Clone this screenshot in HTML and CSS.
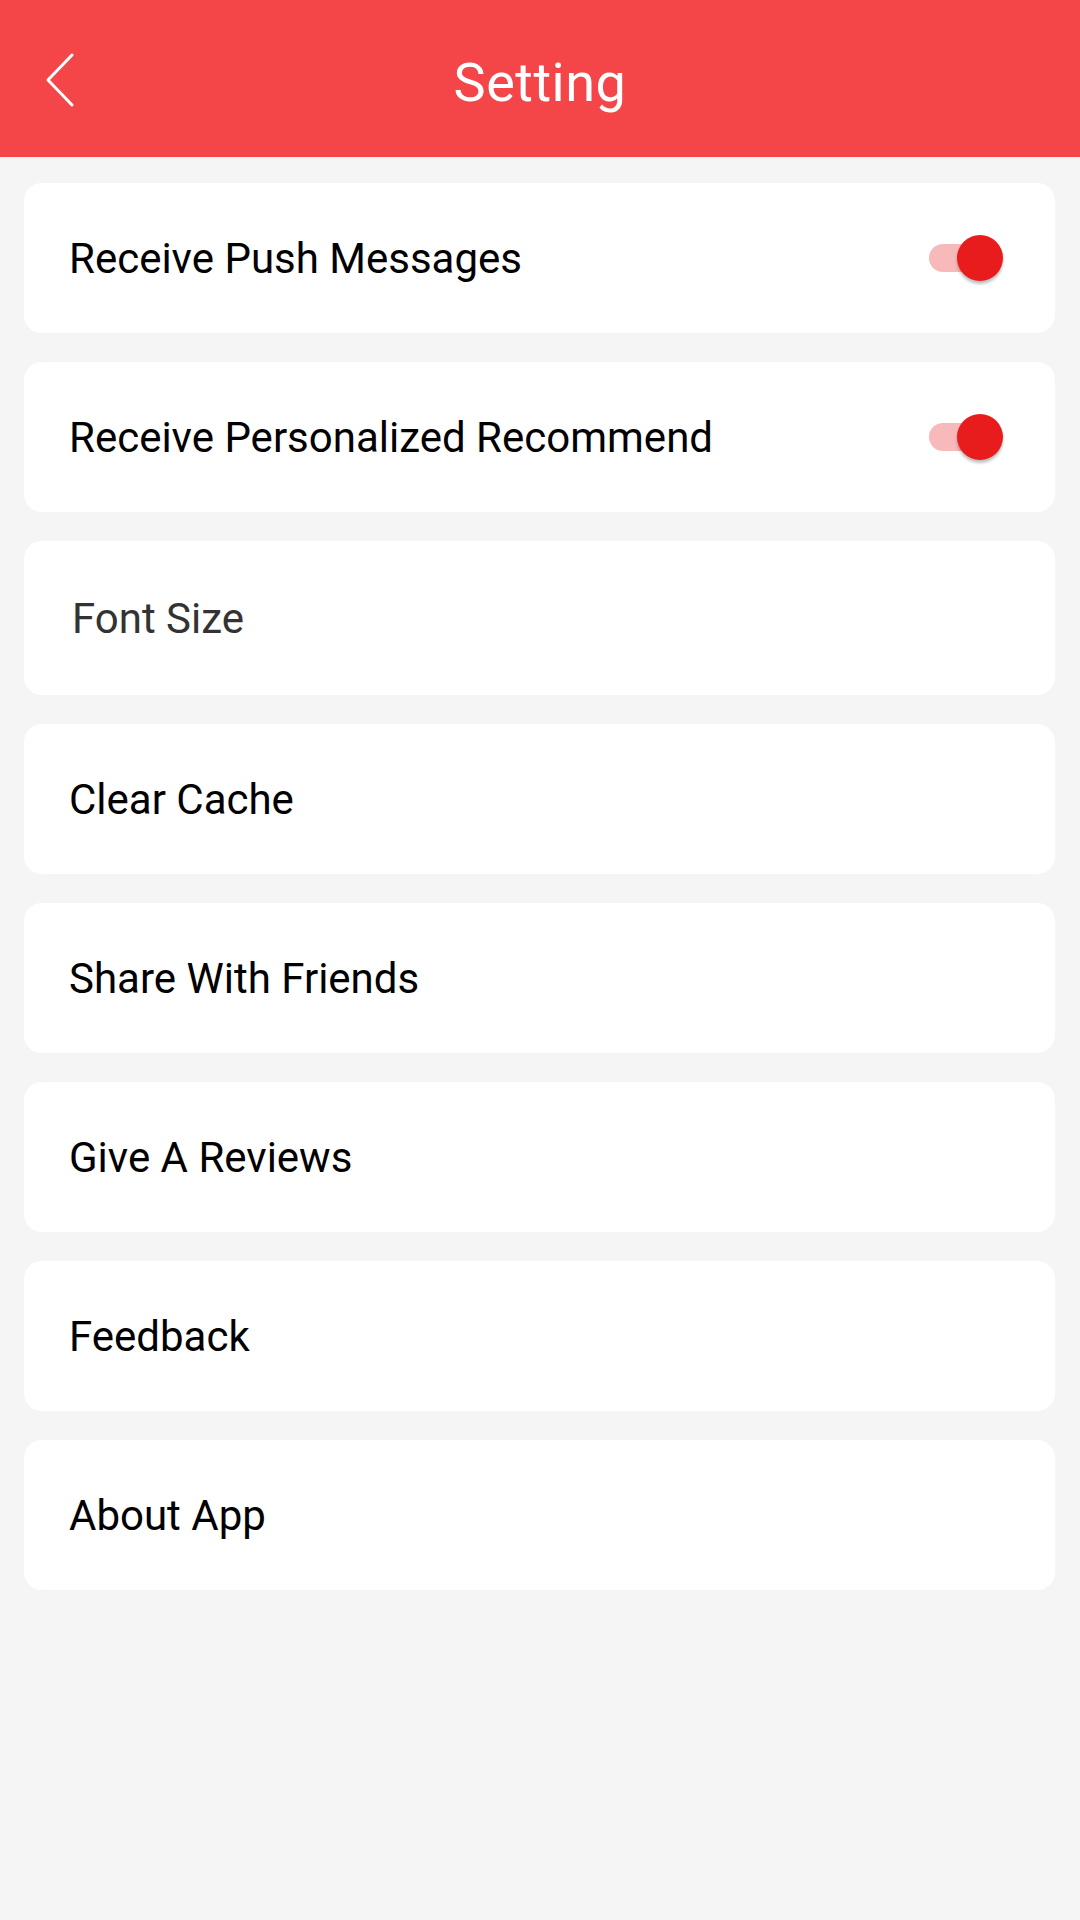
FILE: index.html
```html
<!DOCTYPE html>
<html lang="en">
<head>
	<meta charset="UTF-8">
	<title>Setting</title>
	<link rel="stylesheet" href="styles.css">
</head>
<body>
	<div class="header">
		<a href="javascript:;" class="back">
			<svg width="30" height="56" viewBox="0 0 30 56"><polyline points="27,2 3,27 27,52" fill="none" stroke="#fff" stroke-width="3" stroke-linecap="round" stroke-linejoin="round"/></svg>
		</a>
		<h1 class="title">Setting</h1>
	</div>
	<ul class="list">
		<li class="item">
			<span>Receive Push Messages</span>
			<span class="switch on"><i></i></span>
		</li>
		<li class="item">
			<span>Receive Personalized Recommend</span>
			<span class="switch on"><i></i></span>
		</li>
		<li class="item tall"><span class="soft">Font Size</span></li>
		<li class="item"><span>Clear Cache</span></li>
		<li class="item"><span>Share With Friends</span></li>
		<li class="item"><span>Give A Reviews</span></li>
		<li class="item"><span>Feedback</span></li>
		<li class="item"><span>About App</span></li>
	</ul>
</body>
</html>
```

FILE: styles.css
```css
*{margin:0;padding:0;list-style:none;box-sizing:border-box;}
body{background:#f5f5f5;font-family:Roboto,"Noto Sans",sans-serif;width:1080px;min-height:1920px;}
a{text-decoration:none;color:#fff;}
.header{height:157px;background:#f44649;display:flex;align-items:center;justify-content:center;position:relative;}
.back{position:absolute;left:45px;top:53px;display:block;width:30px;height:56px;}
.back svg{display:block;}
.title{color:#fff;font-weight:400;font-size:54px;letter-spacing:0.5px;margin-top:8px;}
.list{padding:26px 25px 0 24px;display:flex;flex-direction:column;gap:29px;}
.item{height:150px;background:#fff;border-radius:18px;display:flex;align-items:center;justify-content:space-between;padding:0 52px 0 45px;font-size:42px;color:#000;}
.item.tall{height:154px;}
.item .soft{color:#333;margin-left:3px;}
.switch{position:relative;width:74px;height:46px;display:block;}
.switch:before{content:"";position:absolute;left:0;top:9px;width:60px;height:28px;border-radius:14px;background:#f7b9ba;}
.switch i{position:absolute;right:0;top:0;width:46px;height:46px;border-radius:50%;background:#e81b1d;box-shadow:0 3px 3px rgba(0,0,0,0.25);}
```
